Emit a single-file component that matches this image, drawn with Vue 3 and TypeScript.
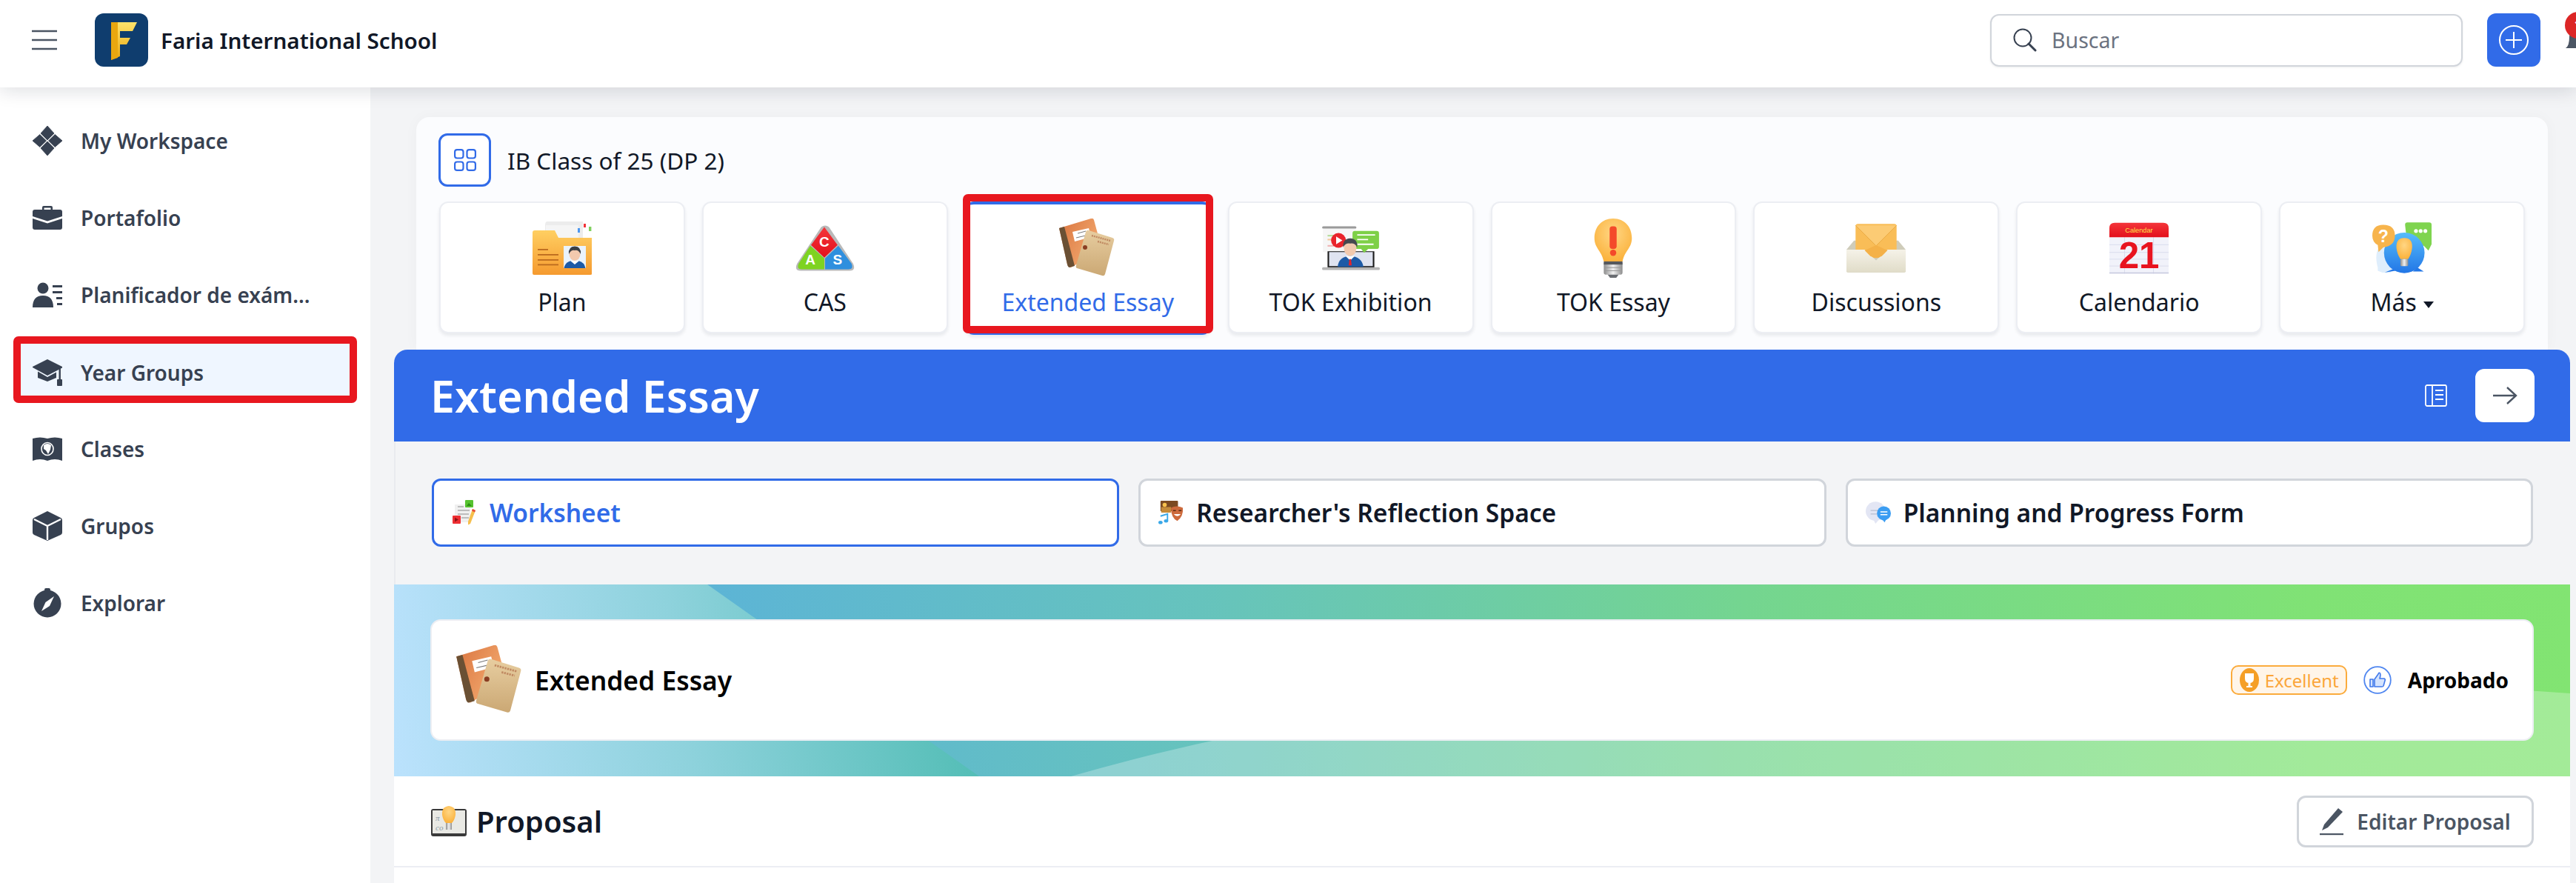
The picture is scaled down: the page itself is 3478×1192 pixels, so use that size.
<script setup lang="ts">
interface NavItem {
  label: string;
  icon: string;
  active?: boolean;
}

interface Tile {
  label: string;
  icon: string;
  active?: boolean;
  caret?: boolean;
}

const navItems: NavItem[] = [
  { label: 'My Workspace', icon: 'nav-workspace' },
  { label: 'Portafolio', icon: 'nav-portfolio' },
  { label: 'Planificador de exám...', icon: 'nav-planner' },
  { label: 'Year Groups', icon: 'nav-cap', active: true },
  { label: 'Clases', icon: 'nav-book' },
  { label: 'Grupos', icon: 'nav-cube' },
  { label: 'Explorar', icon: 'nav-compass' },
];

const tiles: Tile[] = [
  { label: 'Plan', icon: 'tile-plan' },
  { label: 'CAS', icon: 'tile-cas' },
  { label: 'Extended Essay', icon: 'tile-essay', active: true },
  { label: 'TOK Exhibition', icon: 'tile-exhibition' },
  { label: 'TOK Essay', icon: 'tile-bulb' },
  { label: 'Discussions', icon: 'tile-mail' },
  { label: 'Calendario', icon: 'tile-calendar' },
  { label: 'Más', icon: 'tile-more', caret: true },
];

const tabs = [
  { label: 'Worksheet', icon: 'tab-sheet', active: true },
  { label: "Researcher's Reflection Space", icon: 'tab-masks', active: false },
  { label: 'Planning and Progress Form', icon: 'tab-chat', active: false },
];
</script>

<template>
  <div class="page">
    <!-- sprite: the school's artwork redrawn as symbols -->
    <svg class="sprite" aria-hidden="true">
      <defs>
        <linearGradient id="g-folder" x1="0" y1="0" x2="0" y2="1">
          <stop offset="0" stop-color="#ffcf62" />
          <stop offset="1" stop-color="#f59a2f" />
        </linearGradient>
        <linearGradient id="g-logo" x1="0" y1="0" x2="0" y2="1">
          <stop offset="0" stop-color="#ffe36b" />
          <stop offset="1" stop-color="#e9a70f" />
        </linearGradient>
        <linearGradient id="g-orange" x1="0" y1="0" x2="1" y2="0.6">
          <stop offset="0" stop-color="#d9743f" />
          <stop offset="1" stop-color="#f5ad72" />
        </linearGradient>
        <linearGradient id="g-tan" x1="0" y1="0" x2="0" y2="1">
          <stop offset="0" stop-color="#e7cda0" />
          <stop offset="1" stop-color="#cba874" />
        </linearGradient>
        <radialGradient id="g-bulb" cx="0.5" cy="0.35" r="0.65">
          <stop offset="0" stop-color="#ffd684" />
          <stop offset="1" stop-color="#fbb23c" />
        </radialGradient>
        <linearGradient id="g-metal" x1="0" y1="0" x2="1" y2="0">
          <stop offset="0" stop-color="#8d8d8d" />
          <stop offset="0.5" stop-color="#f1f1f1" />
          <stop offset="1" stop-color="#8d8d8d" />
        </linearGradient>
        <linearGradient id="g-env" x1="0" y1="0" x2="0" y2="1">
          <stop offset="0" stop-color="#f5f2e8" />
          <stop offset="1" stop-color="#e0dcc8" />
        </linearGradient>
        <linearGradient id="g-red" x1="0" y1="0" x2="0" y2="1">
          <stop offset="0" stop-color="#f4353a" />
          <stop offset="1" stop-color="#e3101c" />
        </linearGradient>
        <linearGradient id="g-blue" x1="0" y1="0" x2="0" y2="1">
          <stop offset="0" stop-color="#56bcfb" />
          <stop offset="1" stop-color="#2276e6" />
        </linearGradient>
      </defs>

      <symbol id="nav-workspace" viewBox="0 0 40 40">
        <path d="M20 0 L29 10 L20 19 L11 10 Z M20 21 L29 30 L20 40 L11 30 Z M9.8 11.5 L18.5 20 L9.8 28.5 L0 20 Z M30.2 11.5 L40 20 L30.2 28.5 L21.5 20 Z" fill="currentColor" stroke="currentColor" stroke-width="0.8" stroke-linejoin="round" />
      </symbol>
      <symbol id="nav-portfolio" viewBox="0 0 40 34">
        <path d="M13 6 V3 Q13 1 15 1 H25 Q27 1 27 3 V6 H24.5 V3.5 H15.5 V6 Z" fill="currentColor" />
        <path d="M3 6 H37 Q40 6 40 9 V15 L20 21.5 L0 15 V9 Q0 6 3 6 Z" fill="currentColor" />
        <path d="M0 18 L20 24.5 L40 18 V30 Q40 33 37 33 H3 Q0 33 0 30 Z" fill="currentColor" />
      </symbol>
      <symbol id="nav-planner" viewBox="0 0 40 34">
        <circle cx="14" cy="8" r="7.5" fill="currentColor" />
        <path d="M0 34 Q0 18 14 18 Q28 18 28 34 Z" fill="currentColor" />
        <path d="M27 4 H40 V7 H27 Z M27 12 H40 V15 H27 Z M32 20 H40 V23 H32 Z M33 28 H40 V31 H33 Z" fill="currentColor" />
      </symbol>
      <symbol id="nav-cap" viewBox="0 0 40 36">
        <path d="M20 0 L40 10 V11.5 L20 22 L0 11 V10 Z" fill="currentColor" />
        <path d="M7 16.5 L20 24 L32 17.5 V25 L20 30 L7 25 Z" fill="currentColor" />
        <rect x="35.5" y="12" width="2.4" height="16" fill="currentColor" />
        <rect x="33" y="27" width="7" height="9" rx="1" fill="currentColor" />
      </symbol>
      <symbol id="nav-book" viewBox="0 0 40 32">
        <path d="M0 2 Q10 -1 20 2 Q30 -1 40 2 V32 Q30 28 20 32 Q10 28 0 32 Z" fill="currentColor" />
        <ellipse cx="20" cy="16" rx="8" ry="8.5" fill="none" stroke="#fff" stroke-width="1.6" />
        <path d="M15 11 Q20 7 25 11 L24 17 L21 23 L18 18 L15 16 Z" fill="#fff" />
      </symbol>
      <symbol id="nav-cube" viewBox="0 0 40 40">
        <path d="M20 0 L38 9 Q40 10 40 12 V29 Q40 31 38 32 L20 40 L2 32 Q0 31 0 29 V12 Q0 10 2 9 Z" fill="currentColor" />
        <path d="M2 11 L20 20 L38 11 M20 20 V39" fill="none" stroke="#fff" stroke-width="2.4" />
      </symbol>
      <symbol id="nav-compass" viewBox="0 0 40 40">
        <rect x="16" y="0" width="8" height="4" rx="2" fill="currentColor" />
        <circle cx="20" cy="21" r="18.5" fill="currentColor" />
        <path d="M29 11 L23 24 L12 31 L17.5 19 Z" fill="#fff" />
      </symbol>

      <symbol id="tile-plan" viewBox="0 0 80 72">
        <path d="M17 5 Q17 0 20 0 H68 V30 H17 Z" fill="#ececec" />
        <path d="M18 5 H62 V30 H18 Z" fill="#f5f5f5" />
        <rect x="69" y="3" width="3" height="5" fill="#f1353a" />
        <rect x="76" y="7" width="3.4" height="6" fill="#7fd05f" />
        <rect x="61" y="9" width="3" height="6" fill="#4c97f0" />
        <path d="M0 15 Q0 12 3 12 H30 L35 22 H80 V71 Q80 72 78 72 H2 Q0 72 0 70 Z" fill="url(#g-folder)" />
        <g fill="#bb6a1e">
          <rect x="7" y="37" width="14" height="1.8" />
          <rect x="7" y="44" width="28" height="1.8" />
          <rect x="7" y="51" width="28" height="1.8" />
          <rect x="7" y="57.5" width="28" height="1.8" />
        </g>
        <rect x="42" y="33" width="30" height="30" fill="#eaf3fc" />
        <path d="M42.5 63 Q44 55 52 53 H62 Q70 55 71.5 63 Z" fill="#1d5aa6" />
        <path d="M51 53 L57 58 L63 53 Z" fill="#fff" />
        <ellipse cx="57" cy="44" rx="7.5" ry="9" fill="#f2c9ae" />
        <path d="M49 44 Q48 34 57 33.5 Q66 34 65 44 Q62 38 57 39 Q52 38 49 44 Z" fill="#3b3f45" />
      </symbol>

      <symbol id="tile-essay" viewBox="0 0 80 80">
        <path d="M1 13 L44 0 Q47 -1 48 2 L60 46 L24 62 L17 66 Q13 66 12 62 Z" fill="url(#g-orange)" />
        <path d="M1 13 L8 11 L22 64 L15 66 Q13 66 12 62 Z" fill="#6a5034" />
        <path d="M19 18 L41 13 L44 25 L22 31 Z" fill="#fff" />
        <path d="M26 20 L37 17 M24 26 L41 22" stroke="#777" stroke-width="1" />
        <path d="M41 16 L73 26 Q76 27 75 30 L63 75 Q62 78 59 77 L25 67 Q23 66 24 63 L37 18 Q38 15 41 16 Z" fill="url(#g-tan)" />
        <circle cx="36" cy="39" r="3" fill="#8a3d22" />
        <path d="M45 23 L70 30 M53 31 L68 35" stroke="#c08a62" stroke-width="2.4" stroke-dasharray="2 1" />
      </symbol>

      <symbol id="tile-exhibition" viewBox="0 0 76 58">
        <rect x="1" y="1" width="44" height="3" rx="1.5" fill="#9a9a9a" />
        <rect x="2" y="4" width="42" height="30" fill="#f6f6f6" />
        <rect x="8" y="12" width="10" height="2" fill="#b5dc9a" />
        <rect x="8" y="17" width="8" height="2" fill="#f5c69a" />
        <rect x="8" y="25" width="9" height="2" fill="#efb4b4" />
        <rect x="8" y="33" width="60" height="21" fill="#1b1b1b" />
        <rect x="10" y="34" width="56" height="18" fill="#dfe3f0" />
        <rect x="1" y="53.5" width="74" height="3.5" rx="1.5" fill="#b5b5b5" />
        <circle cx="22" cy="19" r="9.5" fill="#e9242c" />
        <path d="M19 14 L27 19 L19 24 Z" fill="#fff" />
        <path d="M40 10 Q40 7 43 7 H71 Q74 7 74 10 V27 Q74 30 71 30 H60 L55 35 L51 30 H43 Q40 30 40 27 Z" fill="#7ed047" />
        <path d="M46 12 H69 M46 18 H60 M46 24 H67" stroke="#fff" stroke-width="1.8" />
        <path d="M21 53 Q22 40 37 39 Q52 40 54 53 Z" fill="#1d5aa6" />
        <path d="M31 39 L37 45 L43 39 Z" fill="#fff" />
        <path d="M36 43 H38 L39 51 H35 Z" fill="#e3242b" />
        <ellipse cx="37" cy="29" rx="8" ry="10" fill="#f2c9ae" />
        <path d="M28 28 Q27 17 37 16.5 Q47 17 46 28 Q43 22 37 23 Q31 22 28 28 Z" fill="#45494f" />
      </symbol>

      <symbol id="tile-bulb" viewBox="0 0 50 76">
        <path d="M25 0 C40 0 49 11 49 25 C49 38 40 41 37 55 H13 C10 41 1 38 1 25 C1 11 10 0 25 0 Z" fill="url(#g-bulb)" />
        <rect x="20.5" y="10" width="9" height="29" rx="3.5" fill="#f44a2a" />
        <circle cx="25" cy="44" r="4" fill="#f44a2a" />
        <rect x="13" y="55" width="24" height="17" rx="3" fill="url(#g-metal)" />
        <rect x="13" y="55" width="24" height="4" fill="#55585d" />
        <path d="M14 63 H36 M14 67 H36" stroke="#999" stroke-width="1" />
        <path d="M18 72 H32 L29 76 H21 Z" fill="#6a6d72" />
      </symbol>

      <symbol id="tile-mail" viewBox="0 0 78 64">
        <path d="M10 22 L0 34 V62 Q0 64 2 64 H76 Q78 64 78 62 V34 L68 22 Z" fill="#cfccba" />
        <path d="M0 34 H24 L39 48 L54 34 H78 V62 Q78 64 76 64 H2 Q0 64 0 62 Z" fill="url(#g-env)" />
        <path d="M12 3 Q12 0 15 0 H63 Q66 0 66 3 V34 L54 34 L48 38 Q40 48 30 38 L24 34 L12 34 Z" fill="#f9bd57" />
        <path d="M12 2 L39 29 L66 2" fill="#fccb74" stroke="#e5a33a" stroke-width="0.8" />
        <path d="M24 35 L39 28 L54 35 L47 42 Q39 48 31 42 Z" fill="#f4b148" />
      </symbol>

      <symbol id="tab-sheet" viewBox="0 0 32 34">
        <rect x="3" y="6" width="21" height="24" fill="#f0f0f0" />
        <path d="M7 9 H15 M7 14 H23 M7 19 H22 M12 24 H22" stroke="#8a8a8a" stroke-width="1.2" />
        <rect x="17" y="0" width="11" height="10" rx="1" fill="#56c22f" />
        <path d="M19 8 L22 4 L26 8 Z" fill="#2c8e14" />
        <rect x="0" y="21" width="11" height="11" rx="1" fill="#ee2f33" />
        <path d="M3 23.5 L8 26.5 L3 29.5 Z" fill="#8d1216" />
        <path d="M27 12 L31 14 L24 32 L21 33.5 L21 29 Z" fill="#f6bf4c" />
        <path d="M27 12 L31 14 L30 16.5 L26 14.5 Z" fill="#e54a3b" />
      </symbol>
      <symbol id="tab-masks" viewBox="0 0 36 34">
        <rect x="3" y="0" width="25" height="15" rx="1" fill="#7b4a22" />
        <circle cx="9" cy="6" r="3" fill="#f8c24d" />
        <rect x="4" y="9" width="14" height="8" fill="#c58b3a" />
        <path d="M18 10 Q26 6 35 10 Q36 22 27 29 Q18 24 18 10 Z" fill="#cd6a3c" />
        <path d="M21 14 H25 M29 14 H33" stroke="#5a2a12" stroke-width="1.6" />
        <path d="M22 19 Q27 25 32 19 Z" fill="#fff" />
        <path d="M3 22 L13 19 V29" fill="none" stroke="#3aa8e8" stroke-width="2" />
        <ellipse cx="3" cy="31" rx="3" ry="2.4" fill="#3aa8e8" />
        <ellipse cx="11" cy="29" rx="3" ry="2.4" fill="#3aa8e8" />
      </symbol>
      <symbol id="tab-chat" viewBox="0 0 36 32">
        <ellipse cx="14" cy="14" rx="14" ry="13.5" fill="#e3e6f4" />
        <path d="M11 26 L14 32 L19 26 Z" fill="#e3e6f4" />
        <path d="M7 13 H22 M7 18 H16" stroke="#b8bdd0" stroke-width="1.4" />
        <circle cx="26" cy="17" r="10" fill="#3b9df2" />
        <path d="M24 26 L27 30 L29 26 Z" fill="#3b9df2" />
        <path d="M21 15 H31 M21 19 H31" stroke="#fff" stroke-width="1.6" />
      </symbol>
    </svg>

    <header class="topbar">
      <svg class="burger" viewBox="0 0 34 28" aria-hidden="true">
        <path d="M0 2 H34 M0 14 H34 M0 26 H34" stroke="#4b5563" stroke-width="2.6" />
      </svg>
      <div class="logo">
        <svg viewBox="0 0 72 72" aria-hidden="true">
          <path d="M22 12 H57 L51 24 H34 V33 H48 L43 42 H34 V58 L22 63 Z" fill="url(#g-logo)" />
          <path d="M22 12 H31 V60 L22 63 Z" fill="#e9a70f" />
        </svg>
      </div>
      <span class="school">Faria International School</span>
      <div class="search">
        <svg class="search-icon" viewBox="0 0 32 32" aria-hidden="true">
          <circle cx="13" cy="13" r="11.5" fill="none" stroke="#374151" stroke-width="2" />
          <path d="M21 21 L30 30" stroke="#374151" stroke-width="3" stroke-linecap="round" />
        </svg>
        <span>Buscar</span>
      </div>
      <button class="add" type="button" aria-label="Add">
        <svg viewBox="0 0 40 40" aria-hidden="true">
          <circle cx="20" cy="20" r="19" fill="none" stroke="#fff" stroke-width="2" />
          <path d="M20 9 V31 M9 20 H31" stroke="#fff" stroke-width="2" />
        </svg>
      </button>
      <div class="bell">
        <svg viewBox="0 0 40 40" aria-hidden="true">
          <path d="M20 2 Q34 4 34 20 Q34 32 39 35 H1 Q6 32 6 20 Q6 4 20 2 Z" fill="#4b5563" />
          <rect x="16" y="37" width="8" height="3" rx="1.5" fill="#4b5563" />
        </svg>
        <span class="bell-count">1</span>
      </div>
    </header>

    <div class="body">
      <nav class="sidebar">
        <a v-for="item in navItems" :key="item.label" class="nav-item" :class="{ active: item.active }">
          <svg class="nav-icon" aria-hidden="true"><use :href="`#${item.icon}`" /></svg>
          <span>{{ item.label }}</span>
          <i v-if="item.active" class="marker"></i>
        </a>
      </nav>

      <main class="main">
        <section class="panel">
          <div class="panel-head">
            <span class="grid-btn">
              <svg viewBox="0 0 30 30" aria-hidden="true">
                <g fill="none" stroke="#316be8" stroke-width="2.2">
                  <rect x="1.1" y="1.1" width="11.4" height="11.4" rx="3" />
                  <rect x="17.5" y="1.1" width="11.4" height="11.4" rx="3" />
                  <rect x="1.1" y="17.5" width="11.4" height="11.4" rx="3" />
                  <rect x="17.5" y="17.5" width="11.4" height="11.4" rx="3" />
                </g>
              </svg>
            </span>
            <span class="class-name">IB Class of 25 (DP 2)</span>
          </div>
          <div class="tiles">
            <a v-for="tile in tiles" :key="tile.label" class="tile" :class="{ active: tile.active }">
              <!-- icons that carry lettering stay inline -->
              <svg v-if="tile.icon === 'tile-cas'" class="tile-icon" viewBox="0 0 76 60" aria-hidden="true">
                <path d="M33 3 Q38 -1 43 3 L74 50 Q78 59 69 59 H7 Q-2 59 2 50 Z" fill="#b9b9b9" />
                <path d="M37 3 L54 26 L37 42 L20 26 Z" fill="url(#g-red)" />
                <path d="M19 27 L37 43 V57 H8 Q1 57 4 50 Z" fill="#7ed321" />
                <path d="M55 27 L38 43 V57 H68 Q75 57 72 50 Z" fill="#2f8fde" />
                <text class="cas" x="37" y="28" text-anchor="middle">C</text>
                <text class="cas" x="19" y="51" text-anchor="middle">A</text>
                <text class="cas" x="54" y="51" text-anchor="middle">S</text>
              </svg>
              <svg v-else-if="tile.icon === 'tile-calendar'" class="tile-icon" viewBox="0 0 78 67" aria-hidden="true">
                <path d="M0 19 H78 V67 H0 Z" fill="#f1f2fa" />
                <path d="M0 29 H78 M0 39 H78 M0 48 H78 M0 57 H78 M20 19 V67 M58 19 V67" stroke="#d5d8ea" stroke-width="0.8" />
                <path d="M0 65.5 H78 V67 H0 Z" fill="#c5c8de" />
                <path d="M0 7 Q0 0 7 0 H71 Q78 0 78 7 V19 H0 Z" fill="url(#g-red)" />
                <text class="cal-head" x="39" y="13" text-anchor="middle">Calendar</text>
                <text class="cal-day" x="39" y="60" text-anchor="middle">21</text>
              </svg>
              <svg v-else-if="tile.icon === 'tile-more'" class="tile-icon" viewBox="0 0 76 66" aria-hidden="true">
                <path d="M42 3 Q42 0 45 0 H73 Q76 0 76 3 V28 L72 36 L66 30 H45 Z" fill="#7fd44f" />
                <circle cx="56" cy="11" r="2.5" fill="#fff" />
                <circle cx="62" cy="11" r="2.5" fill="#fff" />
                <circle cx="68" cy="11" r="2.5" fill="#fff" />
                <path d="M7 58 Q2 40 10 30 L30 40 L24 64 Q14 66 7 62 Z" fill="#dfeefc" />
                <ellipse cx="41" cy="39" rx="26" ry="26" fill="url(#g-blue)" />
                <path d="M26 60 L16 64 L30 62 Z M58 58 L66 63 L52 63 Z" fill="#2276e6" />
                <path d="M14 3 Q29 3 29 17 Q29 30 14 32 L8 38 L7 29 Q0 25 0 17 Q0 3 14 3 Z" fill="#f7b44c" />
                <text class="more-q" x="14" y="25" text-anchor="middle">?</text>
                <path d="M41 20 Q52 20 51 33 Q50 41 46 47 H36 Q32 41 31 33 Q30 20 41 20 Z" fill="url(#g-bulb)" />
                <rect x="36" y="47" width="10" height="9" rx="1.5" fill="url(#g-metal)" />
              </svg>
              <svg v-else class="tile-icon" aria-hidden="true"><use :href="`#${tile.icon}`" /></svg>
              <span class="tile-label">
                {{ tile.label }}<i v-if="tile.caret" class="caret"></i>
              </span>
              <i v-if="tile.active" class="marker"></i>
            </a>
          </div>
        </section>

        <section class="card">
          <div class="card-head">
            <h1>Extended Essay</h1>
            <svg class="book-icon" viewBox="0 0 32 32" aria-hidden="true">
              <g fill="none" stroke="#fff" stroke-width="1.8">
                <rect x="2" y="2" width="28" height="28" rx="2" />
                <path d="M11 2 V30 M15 9 H26 M15 15 H26 M15 21 H26" />
              </g>
            </svg>
            <button class="next" type="button" aria-label="Next">
              <svg viewBox="0 0 36 28" aria-hidden="true">
                <path d="M2 14 H33 M21 3 L33 14 L21 25" fill="none" stroke="#4b5563" stroke-width="2.4" />
              </svg>
            </button>
          </div>

          <div class="tabs">
            <a v-for="tab in tabs" :key="tab.label" class="tab" :class="{ active: tab.active }">
              <svg class="tab-icon" aria-hidden="true"><use :href="`#${tab.icon}`" /></svg>
              <span>{{ tab.label }}</span>
            </a>
          </div>

          <div class="banner">
            <svg class="banner-art" viewBox="0 0 2938 259" preserveAspectRatio="none" aria-hidden="true">
              <defs>
                <linearGradient id="g-wedge" gradientUnits="userSpaceOnUse" x1="0" y1="259" x2="790" y2="150">
                  <stop offset="0" stop-color="#bbe2fd" />
                  <stop offset="0.5" stop-color="#8ed2dc" />
                  <stop offset="1" stop-color="#52bdb5" />
                </linearGradient>
              </defs>
              <path d="M0 0 H423 L790 259 H0 Z" fill="url(#g-wedge)" />
              <path d="M914 259 Q1500 90 2400 110 L2938 147 V259 Z" fill="#fff" fill-opacity="0.27" />
            </svg>
            <div class="essay-card">
              <svg class="essay-icon" aria-hidden="true"><use href="#tile-essay" /></svg>
              <span class="essay-title">Extended Essay</span>
              <span class="badge">
                <svg viewBox="0 0 26 32" aria-hidden="true">
                  <ellipse cx="13" cy="16" rx="13" ry="16" fill="#f59f26" />
                  <path d="M7 7 H19 V14 Q19 20 13 20 Q7 20 7 14 Z M11.5 20 H14.5 V24 H17 V26 H9 V24 H11.5 Z" fill="#fff" />
                </svg>
                Excellent
              </span>
              <svg class="thumb" viewBox="0 0 38 38" aria-hidden="true">
                <circle cx="19" cy="19" r="17.8" fill="none" stroke="#4f86f0" stroke-width="1.8" />
                <path d="M9 18 H13 V28 H9 Z M15 18 L20 11 Q21 8 22.5 10 Q23.5 12 22 17 H28 Q30 18 29 20 L27 27 Q26.5 28 25 28 H15 Z" fill="#d4e3fd" stroke="#3f78ec" stroke-width="1.6" stroke-linejoin="round" />
              </svg>
              <span class="status">Aprobado</span>
            </div>
          </div>

          <div class="section-row">
            <svg class="lamp" viewBox="0 0 50 42" aria-hidden="true">
              <rect x="1" y="4" width="48" height="37" rx="3" fill="#3a3a3a" />
              <rect x="3" y="6" width="44" height="31" fill="#e9e9e4" />
              <text class="lamp-t" x="7" y="20">π</text>
              <text class="lamp-t" x="7" y="33">co</text>
              <path d="M25 0 Q35 1 34 12 Q33 19 29 23 H21 Q17 19 16 12 Q15 1 25 0 Z" fill="url(#g-bulb)" />
              <rect x="21" y="23" width="8" height="9" fill="url(#g-metal)" />
            </svg>
            <h2>Proposal</h2>
            <button class="edit" type="button">
              <svg viewBox="0 0 32 38" aria-hidden="true">
                <path d="M25 1 L31 6 L11 27 L3 31 L6 23 Z" fill="#4b5563" />
                <rect x="0" y="35" width="32" height="2.2" fill="#4b5563" />
              </svg>
              Editar Proposal
            </button>
          </div>
        </section>
      </main>
    </div>
  </div>
</template>

<style>
html,
body {
  margin: 0;
  background: #f3f4f6;
}
</style>

<style scoped>
* {
  box-sizing: border-box;
}

.page {
  width: 3478px;
  height: 1192px;
  overflow: hidden;
  display: flex;
  flex-direction: column;
  font-family: "Noto Sans", "Open Sans", sans-serif;
  color: #111827;
  background: #f3f4f6;
}

.sprite {
  position: absolute;
  width: 0;
  height: 0;
}

.cas {
  font: 700 18px "Liberation Sans", sans-serif;
  fill: #fff;
}

.cal-head {
  font: 400 9px "Liberation Sans", sans-serif;
  fill: #ffe14a;
}

.cal-day {
  font: 700 48px "Liberation Sans", sans-serif;
  fill: #e8141f;
}

.more-q {
  font: 700 22px "Liberation Sans", sans-serif;
  fill: #fff;
}

.lamp-t {
  font: italic 400 11px "Liberation Serif", serif;
  fill: #8a9aa6;
}

/* top bar */
.topbar {
  position: relative;
  z-index: 2;
  flex: none;
  height: 118px;
  display: flex;
  align-items: center;
  padding: 0 0 10px 43px;
  background: #fff;
  box-shadow: 0 4px 24px rgba(17, 24, 39, 0.14);
}

.burger {
  width: 34px;
  height: 28px;
}

.logo {
  width: 72px;
  height: 72px;
  margin-left: 51px;
  border-radius: 12px;
  background: #0f3d6e;
}

.logo svg {
  display: block;
  width: 72px;
  height: 72px;
}

.school {
  margin-left: 17px;
  font-size: 29.6px;
  font-weight: 600;
}

.search {
  width: 638px;
  height: 71px;
  margin-left: auto;
  display: flex;
  align-items: center;
  padding-left: 29px;
  border: 2px solid #d1d5db;
  border-radius: 12px;
  box-shadow: 0 1px 3px rgba(17, 24, 39, 0.08);
  font-size: 28.5px;
  color: #6b7280;
}

.search-icon {
  width: 32px;
  height: 32px;
  margin-right: 20px;
}

.add {
  width: 72px;
  height: 72px;
  margin-left: 33px;
  padding: 0;
  border: 0;
  border-radius: 12px;
  background: #316be8;
}

.add svg {
  display: block;
  width: 40px;
  height: 40px;
  margin: auto;
}

.bell {
  position: relative;
  flex: none;
  width: 40px;
  height: 40px;
  margin: -8px -25px 0 33px;
}

.bell svg {
  display: block;
  width: 40px;
  height: 40px;
}

.bell-count {
  position: absolute;
  top: -14px;
  left: 0;
  width: 36px;
  height: 36px;
  border-radius: 50%;
  background: #dc2626;
  color: #fff;
  font-size: 20px;
  font-weight: 600;
  line-height: 36px;
  text-align: center;
}

/* sidebar */
.body {
  flex: 1;
  min-height: 0;
  display: flex;
}

.sidebar {
  flex: none;
  width: 500px;
  display: flex;
  flex-direction: column;
  gap: 14px;
  padding: 27px 22px 0;
  background: #fff;
}

.nav-item {
  position: relative;
  flex: none;
  height: 90px;
  display: flex;
  align-items: center;
  gap: 25px;
  padding-left: 22px;
  font-size: 28px;
  font-weight: 600;
  color: #374151;
}

.nav-item.active {
  margin: -3px 0 3px;
  padding-top: 8px;
  background: #eff6ff;
}

.nav-icon {
  flex: none;
  width: 40px;
  height: 40px;
}

.marker {
  position: absolute;
  border: 10px solid #e8171f;
  border-radius: 7px;
  pointer-events: none;
}

.nav-item .marker {
  inset: 0 -4px;
}

/* main column */
.main {
  flex: 1;
  min-width: 0;
  display: flex;
  flex-direction: column;
  padding: 0 8px 0 32px;
}

.panel {
  flex: none;
  margin: 40px 30px 0;
  height: 314px;
  padding: 22px 30px 0;
  border-radius: 18px 18px 0 0;
  background: #fbfcfe;
  box-shadow: 0 0 20px rgba(17, 24, 39, 0.03);
}

.panel-head {
  display: flex;
  align-items: center;
  gap: 22px;
}

.grid-btn {
  width: 71px;
  height: 72px;
  display: flex;
  align-items: center;
  justify-content: center;
  border: 3px solid #316be8;
  border-radius: 12px;
  background: #fff;
}

.grid-btn svg {
  width: 30px;
  height: 30px;
}

.class-name {
  font-size: 31.5px;
}

.tiles {
  display: grid;
  grid-template-columns: repeat(8, 1fr);
  align-items: start;
  gap: 23px;
  margin: 20px 1px 0;
}

.tile {
  position: relative;
  height: 178px;
  display: flex;
  flex-direction: column;
  align-items: center;
  padding-top: 21px;
  border: 2px solid #eceef3;
  border-radius: 12px;
  background: #fff;
  box-shadow: 0 3px 4px rgba(17, 24, 39, 0.08);
  font-size: 32px;
}

.tile.active {
  height: 180px;
  border: 0;
  border-top: 4px solid #316be8;
  border-bottom: 2px solid #316be8;
  padding-top: 19px;
  color: #316be8;
}

.tile .marker {
  top: -14px;
  bottom: 0;
  left: -3px;
  right: -3px;
}

.tile-icon {
  flex: none;
  width: 80px;
  height: 80px;
}

.tile-label {
  margin-top: 12px;
  line-height: 41px;
}

.caret {
  display: inline-block;
  margin-left: 9px;
  vertical-align: 4px;
  border: 7px solid transparent;
  border-top: 9px solid #111827;
  border-bottom: 0;
}

/* extended essay card */
.card {
  flex: 1;
  min-height: 0;
  background: #fff;
  border-radius: 18px 18px 0 0;
}

.card-head {
  height: 124px;
  display: flex;
  align-items: center;
  padding: 0 48px 0 49px;
  border-radius: 18px 18px 0 0;
  background: #316be8;
}

.card-head h1 {
  margin: 0 auto 0 0;
  font-size: 59px;
  font-weight: 600;
  color: #fff;
}

.book-icon {
  width: 32px;
  height: 32px;
}

.next {
  width: 80px;
  height: 72px;
  margin-left: 37px;
  padding: 0;
  border: 0;
  border-radius: 12px;
  background: #fff;
}

.next svg {
  display: block;
  width: 36px;
  height: 28px;
  margin: auto;
}

.tabs {
  height: 193px;
  display: grid;
  grid-template-columns: repeat(3, 1fr);
  gap: 26px;
  padding: 50px 50px 0 49px;
  background: #f3f4f6;
  border-left: 2px solid #e9ebef;
}

.tab {
  height: 92px;
  display: flex;
  align-items: center;
  gap: 17px;
  padding-left: 24px;
  border: 3px solid #d1d5db;
  border-radius: 12px;
  background: #fff;
  font-size: 33.5px;
  font-weight: 600;
}

.tab.active {
  border-color: #316be8;
  color: #316be8;
}

.tab-icon {
  flex: none;
  width: 34px;
  height: 34px;
}

.banner {
  position: relative;
  height: 259px;
  padding: 47px 49px 0;
  background: linear-gradient(90deg, #5cb4d6 14%, #66c3bd 37%, #74d590 62%, #80e275 88%, #82e472);
}

.banner-art {
  position: absolute;
  inset: 0;
  width: 100%;
  height: 100%;
}

.essay-card {
  position: relative;
  height: 164px;
  display: flex;
  align-items: center;
  padding: 0 32px 0 32px;
  border: 2px solid #eceef3;
  border-radius: 14px;
  background: #fff;
  color: #000;
}

.essay-icon {
  flex: none;
  width: 94px;
  height: 94px;
}

.essay-title {
  margin: 0 auto 0 13px;
  font-size: 35.4px;
  font-weight: 600;
}

.badge {
  display: flex;
  align-items: center;
  gap: 8px;
  height: 40px;
  padding: 0 9px 0 10px;
  border: 2px solid #fbab3c;
  border-radius: 10px;
  background: #fff5e9;
  font-size: 24px;
  color: #fba63a;
}

.badge svg {
  width: 26px;
  height: 32px;
}

.thumb {
  width: 38px;
  height: 38px;
  margin-left: 22px;
}

.status {
  margin-left: 22px;
  font-size: 28px;
  font-weight: 700;
}

.section-row {
  height: 123px;
  display: flex;
  align-items: center;
  padding: 0 49px;
  border-bottom: 2px solid #eceef3;
}

.lamp {
  flex: none;
  width: 50px;
  height: 42px;
}

.section-row h2 {
  margin: 0 auto 0 12px;
  font-size: 40px;
  font-weight: 600;
}

.edit {
  height: 70px;
  width: 320px;
  display: flex;
  align-items: center;
  justify-content: center;
  gap: 18px;
  border: 3px solid #d1d5db;
  border-radius: 12px;
  background: #fff;
  font-family: inherit;
  font-size: 28px;
  font-weight: 600;
  color: #4b5563;
}

.edit svg {
  width: 32px;
  height: 38px;
}
</style>
